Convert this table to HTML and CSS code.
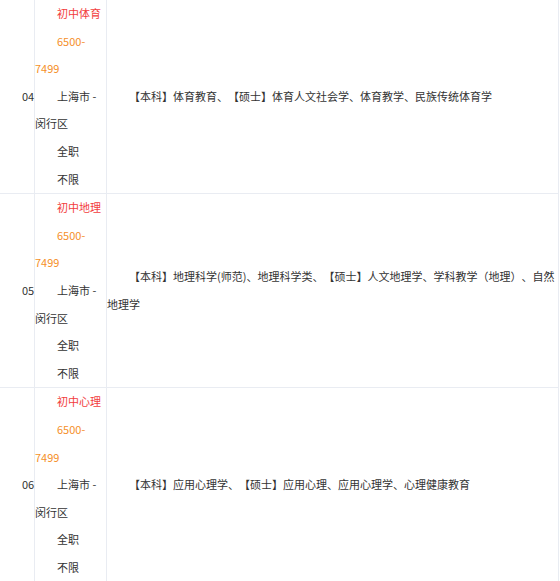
FILE: index.html
```html
<!DOCTYPE html>
<html lang="zh-CN">
<head>
    <meta charset="UTF-8">
    <meta name="viewport" content="width=device-width, initial-scale=1.0">
    <title>招聘岗位</title>
    <link rel="stylesheet" href="styles.css">
</head>
<body>
    <table class="job-table">
        <colgroup>
            <col class="col-no">
            <col class="col-info">
            <col class="col-major">
        </colgroup>
        <tbody>
            <tr>
                <td><p>04</p></td>
                <td>
                    <p class="job-name">初中体育</p>
                    <p class="salary">6500-7499</p>
                    <p>上海市 - 闵行区</p>
                    <p>全职</p>
                    <p>不限</p>
                </td>
                <td><p>【本科】体育教育、【硕士】体育人文社会学、体育教学、民族传统体育学</p></td>
            </tr>
            <tr>
                <td><p>05</p></td>
                <td>
                    <p class="job-name">初中地理</p>
                    <p class="salary">6500-7499</p>
                    <p>上海市 - 闵行区</p>
                    <p>全职</p>
                    <p>不限</p>
                </td>
                <td><p>【本科】地理科学(师范)、地理科学类、【硕士】人文地理学、学科教学（地理）、自然地理学</p></td>
            </tr>
            <tr>
                <td><p>06</p></td>
                <td>
                    <p class="job-name">初中心理</p>
                    <p class="salary">6500-7499</p>
                    <p>上海市 - 闵行区</p>
                    <p>全职</p>
                    <p>不限</p>
                </td>
                <td><p>【本科】应用心理学、【硕士】应用心理、应用心理学、心理健康教育</p></td>
            </tr>
        </tbody>
    </table>
</body>
</html>
```

FILE: styles.css
```css
* {
    margin: 0;
    padding: 0;
    box-sizing: border-box;
}

body {
    background: #fff;
    font-family: "Noto Sans CJK SC", "Noto Sans", sans-serif;
    font-size: 11px;
    color: #333;
    overflow: hidden;
}

.job-table {
    width: 560px;
    margin: -1px 0 0 -1px;
    border-collapse: collapse;
    table-layout: fixed;
}

.col-no {
    width: 35px;
}

.col-info {
    width: 72px;
}

.job-table td {
    border: 1px solid #e9ecf2;
    vertical-align: middle;
    padding: 0;
}

.job-table p {
    line-height: 27.6px;
    text-indent: 2em;
    text-spacing-trim: space-all;
}

.job-name {
    color: #f23d3d;
}

.salary {
    color: #f5902a;
}
```
